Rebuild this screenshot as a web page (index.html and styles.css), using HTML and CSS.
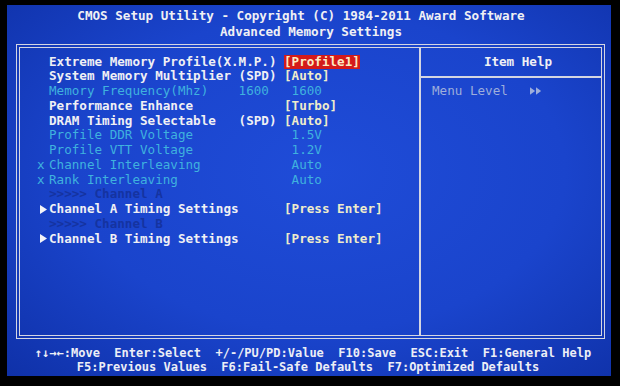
FILE: index.html
```html
<!DOCTYPE html>
<html lang="en">
<head>
  <meta charset="UTF-8" />
  <title>CMOS Setup Utility - Advanced Memory Settings</title>
  <link rel="stylesheet" href="styles.css">
</head>
<body>
  <div class="screen">
    <header class="title">
      <div class="title-main">CMOS Setup Utility - Copyright (C) 1984-2011 Award Software</div>
      <div class="title-sub">Advanced Memory Settings</div>
    </header>

    <main class="frame">
      <section class="menu">
        <div class="row">
          <span class="mark"></span>
          <span class="label">Extreme Memory Profile(X.M.P.)</span>
          <span class="value selected">[Profile1]</span>
        </div>
        <div class="row">
          <span class="mark"></span>
          <span class="label">System Memory Multiplier (SPD)</span>
          <span class="value">[Auto]</span>
        </div>
        <div class="row info">
          <span class="mark"></span>
          <span class="label">Memory Frequency(Mhz)    1600</span>
          <span class="value plain">1600</span>
        </div>
        <div class="row">
          <span class="mark"></span>
          <span class="label">Performance Enhance</span>
          <span class="value">[Turbo]</span>
        </div>
        <div class="row">
          <span class="mark"></span>
          <span class="label">DRAM Timing Selectable   (SPD)</span>
          <span class="value">[Auto]</span>
        </div>
        <div class="row info">
          <span class="mark"></span>
          <span class="label">Profile DDR Voltage</span>
          <span class="value plain">1.5V</span>
        </div>
        <div class="row info">
          <span class="mark"></span>
          <span class="label">Profile VTT Voltage</span>
          <span class="value plain">1.2V</span>
        </div>
        <div class="row info">
          <span class="mark">x</span>
          <span class="label">Channel Interleaving</span>
          <span class="value plain">Auto</span>
        </div>
        <div class="row info">
          <span class="mark">x</span>
          <span class="label">Rank Interleaving</span>
          <span class="value plain">Auto</span>
        </div>
        <div class="row hidden">
          <span class="mark"></span>
          <span class="label">&gt;&gt;&gt;&gt;&gt; Channel A</span>
        </div>
        <div class="row">
          <span class="mark">
            <svg class="arrow" viewBox="0 0 7 9"><polygon points="0,0 7,4.5 0,9" /></svg>
          </span>
          <span class="label">Channel A Timing Settings</span>
          <span class="value">[Press Enter]</span>
        </div>
        <div class="row hidden">
          <span class="mark"></span>
          <span class="label">&gt;&gt;&gt;&gt;&gt; Channel B</span>
        </div>
        <div class="row">
          <span class="mark">
            <svg class="arrow" viewBox="0 0 7 9"><polygon points="0,0 7,4.5 0,9" /></svg>
          </span>
          <span class="label">Channel B Timing Settings</span>
          <span class="value">[Press Enter]</span>
        </div>
      </section>

      <aside class="help">
        <div class="help-title">Item Help</div>
        <div class="help-rule"></div>
        <div class="help-line">
          <span>Menu Level</span>
          <svg class="level" viewBox="0 0 14 9"><polygon points="0,0 6,4.5 0,9" /><polygon points="7,0 13,4.5 7,9" /></svg>
        </div>
      </aside>
    </main>

    <footer class="keys">
      <div class="keys-line">↑↓→←:Move  Enter:Select  +/-/PU/PD:Value  F10:Save  ESC:Exit  F1:General Help</div>
      <div class="keys-line keys-second">F5:Previous Values  F6:Fail-Safe Defaults  F7:Optimized Defaults</div>
    </footer>
  </div>
</body>
</html>
```

FILE: styles.css
```css
:root {
  --screen-blue: #1a44cc;
  --screen-edge: #0f31a8;
  --text: #f0f0f4;
  --value: #efeccb;
  --info: #3fb2de;
  --hidden: #1533a0;
  --frame: #d4d6e2;
  --select: #d41a1a;
  --row: 14.75px;
}

* {
  box-sizing: border-box;
}

body {
  margin: 0;
  background: #000;
  width: 620px;
  height: 386px;
  overflow: hidden;
}

.screen {
  margin: 5px 0 0 7px;
  width: 604px;
  height: 371px;
  padding-top: 3px;
  background: radial-gradient(ellipse at 52% 45%, #1f4cd8 0%, var(--screen-blue) 55%, var(--screen-edge) 100%);
  font-family: "DejaVu Sans Mono", "Liberation Mono", monospace;
  font-weight: bold;
  font-size: 12.6px;
  color: var(--text);
  display: flex;
  flex-direction: column;
}

.title {
  text-align: center;
  line-height: 16px;
}

.title-main {
  padding-right: 16px;
}

.title-sub {
  padding-left: 4px;
}

.frame {
  margin: 4px 6px 0 9px;
  height: 295px;
  border: 4px double var(--frame);
  display: flex;
}

.menu {
  width: 401px;
  padding: 6.6px 0 0 17px;
  border-right: 2px solid var(--frame);
}

.row {
  display: flex;
  height: var(--row);
  line-height: var(--row);
  white-space: pre;
}

.mark {
  width: 12px;
  flex: none;
  display: flex;
  align-items: center;
  color: var(--info);
  font-weight: normal;
}

.arrow {
  width: 7px;
  height: 9px;
  margin-left: 3px;
  fill: #f4f4f8;
}

.label {
  width: 31ch;
  flex: none;
}

.value {
  color: var(--value);
}

.value.plain {
  padding-left: 1ch;
  color: var(--info);
  font-weight: normal;
}

.selected {
  background: var(--select);
  color: #fbe9c4;
}

.info .label {
  color: var(--info);
  font-weight: normal;
}

.hidden .label {
  color: var(--hidden);
}

.help {
  flex: 1;
  padding-top: 6.6px;
}

.help-title {
  height: var(--row);
  line-height: var(--row);
  text-align: center;
  padding-left: 14px;
}

.help-rule {
  height: var(--row);
  display: flex;
  align-items: center;
}

.help-rule::before {
  content: "";
  flex: 1;
  border-top: 2px solid var(--frame);
}

.help-line {
  height: var(--row);
  line-height: var(--row);
  padding-left: 11px;
  color: #9eaedb;
  font-weight: normal;
  display: flex;
  align-items: center;
}

.level {
  width: 12px;
  height: 8px;
  margin-left: 22px;
  fill: #9eaedb;
}

.keys {
  margin-top: 6.5px;
  font-size: 12px;
  line-height: 14.5px;
  text-align: center;
  color: #eceef6;
  padding-left: 8px;
}

.keys-line {
  white-space: pre;
}

.keys-second {
  padding-right: 10px;
}
```
